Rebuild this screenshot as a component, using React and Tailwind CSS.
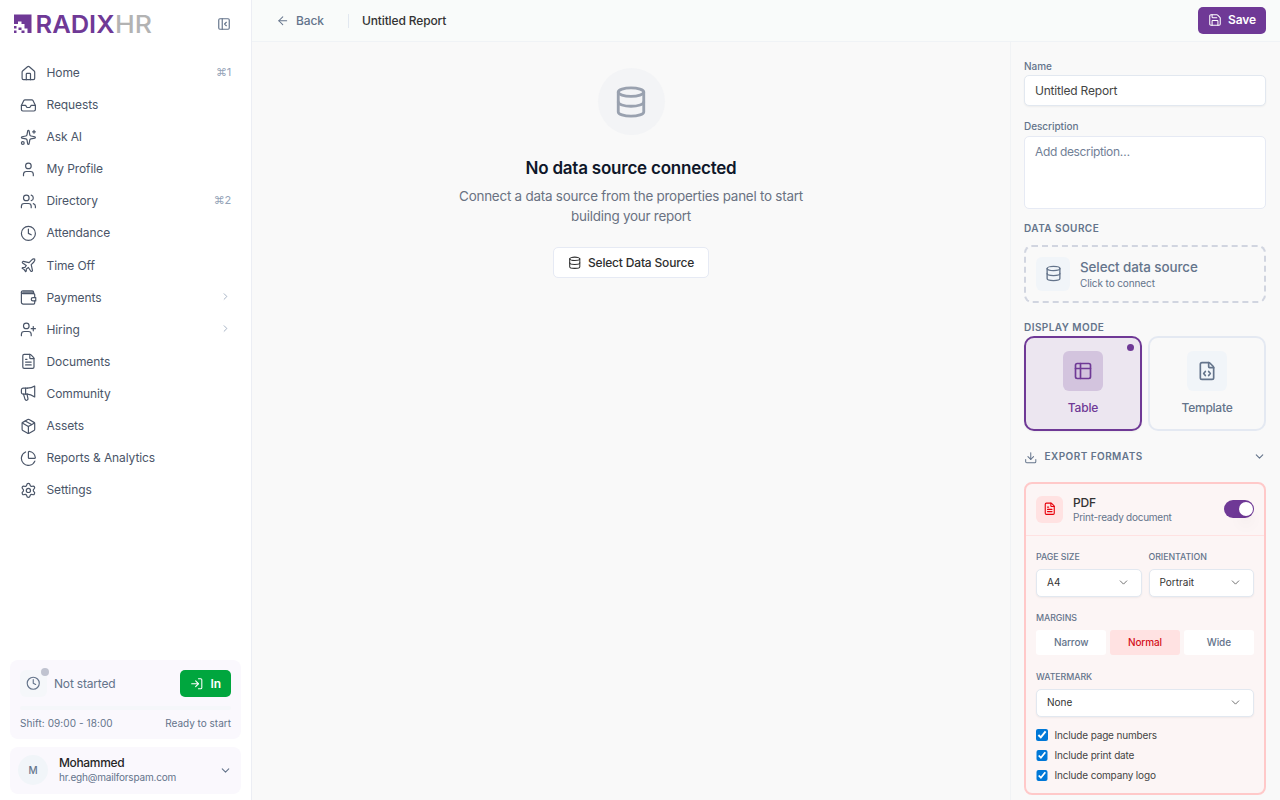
import { useState } from 'react';
import {
  ArrowLeft,
  ChartPie,
  ChevronDown,
  ChevronRight,
  Clock,
  Database,
  Download,
  FileCode,
  FileText,
  House,
  Inbox,
  LogIn,
  Package,
  PanelLeftClose,
  Plane,
  Save,
  Settings,
  Sparkles,
  User,
  UserPlus,
  Users,
} from 'lucide-react';

function WalletIcon({ size, strokeWidth, className }) {
  return (
    <svg width={size} height={size} viewBox="0 0 24 24" fill="none" stroke="currentColor" strokeWidth={strokeWidth} strokeLinecap="round" strokeLinejoin="round" className={className}>
      <path d="M21 12V8a1.500 1.500 0 0 0-1.500-1.500H4a2 2 0 0 1-2-2V19a2.500 2.500 0 0 0 2.500 2.500h15A1.500 1.500 0 0 0 21 20v-3" />
      <path d="M2 4.500A2 2 0 0 1 4 2.500h13.500a2 2 0 0 1 2 2v2M4 4.500h15" />
      <path d="M22.500 12.200h-4a2.400 2.400 0 0 0 0 4.800h4z" />
    </svg>
  );
}

function MegaphoneIcon({ size, strokeWidth, className }) {
  return (
    <svg width={size} height={size} viewBox="0 0 24 24" fill="none" stroke="currentColor" strokeWidth={strokeWidth} strokeLinecap="round" strokeLinejoin="round" className={className}>
      <path d="M10.500 4.500H4.500A2.500 2.500 0 0 0 2 7v3.500A2.500 2.500 0 0 0 4.500 13h6" />
      <path d="M10.500 4.500c4 0 7.500-1 10.500-3v15.500C18 15 14.500 13 10.500 13M8 4.500V13" />
      <path d="M5 13l2.200 7.500a2.200 2.200 0 0 0 4.200-1.200L10 13" />
    </svg>
  );
}

function TableIcon({ size, strokeWidth }) {
  return (
    <svg width={size} height={size} viewBox="0 0 24 24" fill="none" stroke="currentColor" strokeWidth={strokeWidth} strokeLinecap="round" strokeLinejoin="round">
      <rect x="3" y="3" width="18" height="18" rx="2" />
      <path d="M3 9h18M9 3v18" />
    </svg>
  );
}

function Logo() {
  return (
    <svg width="142" height="36" viewBox="0 0 142 36" aria-label="RADIXHR">
      <path
        fill="#6f3996"
        d="M1 8.500h17.500V27h-4v-4.500h-3V18H8.500v-2.500H5V18H1zM1 20h2.500v2.500H1zM5.500 21.500h3V24h-3zM1 24.500h2.500V27H1zM8.500 24.500h3V27h-3z"
      />
      <text x="22.500" y="26.500" fontSize="24.500" fontWeight="600" fill="#6f3996" textLength="79" lengthAdjust="spacingAndGlyphs">RADIX</text>
      <text x="102" y="26.500" fontSize="24.500" fontWeight="500" fill="#b3b3b3" textLength="37" lengthAdjust="spacingAndGlyphs">HR</text>
    </svg>
  );
}

const navItems = [
  { label: 'Home', icon: House, shortcut: '1' },
  { label: 'Requests', icon: Inbox },
  { label: 'Ask AI', icon: Sparkles },
  { label: 'My Profile', icon: User },
  { label: 'Directory', icon: Users, shortcut: '2' },
  { label: 'Attendance', icon: Clock },
  { label: 'Time Off', icon: Plane },
  { label: 'Payments', icon: WalletIcon, expandable: true },
  { label: 'Hiring', icon: UserPlus, expandable: true },
  { label: 'Documents', icon: FileText },
  { label: 'Community', icon: MegaphoneIcon },
  { label: 'Assets', icon: Package },
  { label: 'Reports & Analytics', icon: ChartPie },
  { label: 'Settings', icon: Settings },
];

function Sidebar() {
  return (
    <aside className="flex w-[252px] shrink-0 flex-col border-r border-[#eceef4] bg-white">
      <div className="flex h-[47px] items-center justify-between pl-[13px] pr-5">
        <Logo />
        <PanelLeftClose size={14} strokeWidth={2} className="text-[#64748b]" />
      </div>

      <nav className="mt-[10px] flex flex-col pl-5 pr-5">
        {navItems.map(({ label, icon: Icon, shortcut, expandable }) => (
          <a key={label} href="#" className="flex h-[32.080px] items-center text-[12px] text-[#4a5568]">
            <Icon size={16.800} strokeWidth={1.700} className="mr-[9.700px] shrink-0" />
            <span className="flex-1 tracking-[-0.1px]">{label}</span>
            {shortcut && (
              <span className="mb-0.5 text-[11px] tracking-[-0.3px] text-[#94a3b8]">⌘{shortcut}</span>
            )}
            {expandable && <ChevronRight size={11} strokeWidth={1.800} className="mb-0.5 text-[#94a3b8]" />}
          </a>
        ))}
      </nav>

      <div className="mt-auto flex flex-col gap-[7.500px] px-[10px] pb-[6.500px]">
        <div className="h-[79px] rounded-lg bg-[#faf8fd] px-[10px] pt-[10px]">
          <div className="flex items-center">
            <div className="relative flex size-[27px] items-center justify-center rounded-md bg-[#f5f7fa] text-[#64748b]">
              <Clock size={14.500} strokeWidth={1.900} />
              <span className="absolute -right-[2px] -top-[2px] size-2 rounded-full bg-[#c0c3d0]" />
            </div>
            <span className="ml-[7px] flex-1 text-[12px] tracking-[-0.18px] text-[#64748b]">Not started</span>
            <button className="flex h-[27px] w-[51px] items-center justify-center gap-[7px] rounded-[5px] bg-[#00a63e] text-[12px] font-semibold text-white">
              <LogIn size={13.500} strokeWidth={1.900} />
              In
            </button>
          </div>
          <div className="mt-[9px] h-1 rounded-full bg-[#f5f7fa]" />
          <div className="mt-[5.500px] flex justify-between text-[10px] leading-[15px] text-[#64748b]">
            <span className="tracking-[0.08px]">Shift: 09:00 - 18:00</span>
            <span>Ready to start</span>
          </div>
        </div>

        <div className="flex h-[47px] items-center rounded-lg bg-[#faf8fd] pl-2 pr-[10px]">
          <div className="flex size-[30px] items-center justify-center rounded-full bg-[#f1f5f9] text-[10px] font-medium text-[#64748b]">M</div>
          <div className="mb-[2px] ml-[11px] flex-1">
            <div className="text-[12px] font-medium leading-[15px] tracking-[-0.35px] text-[#262626]">Mohammed</div>
            <div className="text-[10px] leading-[14px] tracking-[-0.18px] text-[#64748b]">hr.egh@mailforspam.com</div>
          </div>
          <ChevronDown size={13} strokeWidth={2} className="-mr-[1px] text-[#64748b]" />
        </div>
      </div>
    </aside>
  );
}

function Header() {
  return (
    <header className="flex h-[42px] shrink-0 items-center border-b border-[#f0f3f6] bg-[#f9fbfa] pl-[24px] pr-[14px]">
      <button className="flex items-center gap-[6.500px] text-[12px] font-medium tracking-[-0.1px] text-[#64748b]">
        <ArrowLeft size={13.500} strokeWidth={1.800} />
        Back
      </button>
      <div className="ml-6 h-[14px] w-px bg-[#e2e8f0]" />
      <h1 className="ml-[13px] flex-1 text-[12px] font-medium tracking-[-0.13px] text-[#333]">Untitled Report</h1>
      <button className="mb-[1px] flex h-[27px] w-[68px] items-center justify-center rounded-[5px] bg-[#6f3996] text-[12px] font-semibold tracking-[-0.1px] text-white">
        <Save size={14} strokeWidth={1.800} className="mr-[6px]" />
        Save
      </button>
    </header>
  );
}

function EmptyState() {
  return (
    <main className="flex flex-1 flex-col items-center pt-[26px]">
      <div className="flex size-[67px] items-center justify-center rounded-full bg-[#f3f4f6] text-[#99a1af]">
        <Database size={34} strokeWidth={2} />
      </div>
      <h2 className="mt-[21px] text-[17px] font-semibold leading-6 tracking-[-0.22px] text-[#0f172a]">No data source connected</h2>
      <p className="mt-[6px] w-[370px] text-center text-[13.440px] leading-5 tracking-[-0.24px] text-[#6a7282]">
        Connect a data source from the properties panel to start building your report
      </p>
      <button className="mt-[21px] flex h-[31px] w-[156px] items-center justify-center gap-[6.500px] rounded-[5px] border border-[#e6eaf4] bg-white text-[12px] font-medium tracking-[-0.18px] text-[#2e2e2e]">
        <Database size={13.500} strokeWidth={1.800} />
        Select Data Source
      </button>
    </main>
  );
}

function Select({ value }) {
  return (
    <button className="flex h-7 w-full items-center justify-between rounded-[5px] border border-[#e2e8f0] bg-white pl-[10px] pr-[11px] text-[10px] text-[#333] shadow-xs">
      {value}
      <ChevronDown size={13} strokeWidth={1.700} className="text-[#666]" />
    </button>
  );
}

function FieldLabel({ children }) {
  return <div className="text-[8.800px] font-medium leading-3 tracking-[-0.05px] text-[#64748b]">{children}</div>;
}

function PdfSettings() {
  const [enabled, setEnabled] = useState(true);
  const [margin, setMargin] = useState('Normal');

  return (
    <div className="mt-[17px] h-[313px] rounded-lg border-2 border-[#ffc9c9] bg-[#fcf5f5]">
      <div className="flex h-[52px] items-center border-b border-[#ffe2e2] px-[10px]">
        <div className="flex size-[27px] items-center justify-center rounded-[6px] bg-[#ffe2e2] text-[#e7000b]">
          <FileText size={13.500} strokeWidth={2} />
        </div>
        <div className="ml-[10px] flex-1">
          <div className="text-[12px] font-medium leading-[15px] tracking-[-0.15px] text-[#333]">PDF</div>
          <div className="text-[10px] leading-[14px] tracking-[-0.25px] text-[#64748b]">Print-ready document</div>
        </div>
        <button
          onClick={() => setEnabled(!enabled)}
          className={enabled ? 'flex h-[18px] w-[30px] items-center justify-end rounded-full bg-[#6f3996] p-[1.500px]' : 'flex h-[18px] w-[30px] items-center rounded-full bg-gray-300 p-[1.500px]'}
        >
          <span className="size-[14px] rounded-full bg-white shadow-lg" />
        </button>
      </div>

      <div className="px-[10px] pt-[15px]">
        <div className="grid grid-cols-2 gap-[7px]">
          <div className="flex flex-col gap-[6px]">
            <FieldLabel>PAGE SIZE</FieldLabel>
            <Select value="A4" />
          </div>
          <div className="flex flex-col gap-[6px]">
            <FieldLabel>ORIENTATION</FieldLabel>
            <Select value="Portrait" />
          </div>
        </div>

        <div className="mt-[15px]">
          <FieldLabel>MARGINS</FieldLabel>
          <div className="mt-[6px] grid grid-cols-3 gap-[3.500px]">
            {['Narrow', 'Normal', 'Wide'].map((option) => (
              <button
                key={option}
                onClick={() => setMargin(option)}
                className={
                  margin === option
                    ? 'h-[25px] rounded-[3px] bg-[#ffe2e2] text-[10px] font-medium tracking-[-0.1px] text-[#d4101b]'
                    : 'h-[25px] rounded-[3px] bg-white text-[10px] font-medium tracking-[-0.1px] text-[#64748b]'
                }
              >
                {option}
              </button>
            ))}
          </div>
        </div>

        <div className="mt-4 flex flex-col gap-[6px]">
          <FieldLabel>WATERMARK</FieldLabel>
          <Select value="None" />
        </div>

        <div className="mt-[11px] flex flex-col gap-[5.300px]">
          {['Include page numbers', 'Include print date', 'Include company logo'].map((option) => (
            <label key={option} className="flex h-[15px] items-center gap-[7px] text-[10px] tracking-[-0.16px] text-[#444]">
              <input type="checkbox" defaultChecked className="size-[11.500px] accent-[#0078d7]" />
              {option}
            </label>
          ))}
        </div>
      </div>
    </div>
  );
}

function PropertiesPanel() {
  return (
    <aside className="flex w-[270px] shrink-0 flex-col border-l border-[#f1f3f5] pl-[13px] pr-[14px] pt-[16px]">
      <label className="text-[10px] font-medium leading-4 text-[#64748b]">Name</label>
      <input
        defaultValue="Untitled Report"
        className="mt-[1px] h-[31px] rounded-[5px] border border-[#e2e8f0] bg-white px-[10px] text-[12px] tracking-[-0.2px] text-[#444] shadow-xs outline-none"
      />

      <label className="mt-3 text-[10px] font-medium leading-4 tracking-[-0.05px] text-[#64748b]">Description</label>
      <textarea
        placeholder="Add description…"
        className="mt-[1.500px] h-[73px] resize-none rounded-[5px] border border-[#e6eaf4] bg-white px-[10px] py-[6px] text-[12px] leading-[17px] tracking-[-0.35px] outline-none placeholder:text-[#718096]"
      />

      <div className="mt-[11px] text-[10px] font-semibold leading-4 tracking-[0.45px] text-[#64748b]">DATA SOURCE</div>
      <button className="mt-[9px] flex h-[58px] items-center rounded-lg border-2 border-dashed border-[#d1d5e0] px-[10px] text-left">
        <div className="flex size-[34px] items-center justify-center rounded-[6px] bg-[#f1f5f9] text-[#64748b]">
          <Database size={17} strokeWidth={1.900} />
        </div>
        <div className="ml-[10px]">
          <div className="text-[13.400px] font-medium leading-[18px] tracking-[-0.08px] text-[#64748b]">Select data source</div>
          <div className="text-[10px] leading-[14px] tracking-[-0.1px] text-[#64748b]">Click to connect</div>
        </div>
      </button>

      <div className="mt-4 text-[10px] font-semibold leading-4 tracking-[0.45px] text-[#64748b]">DISPLAY MODE</div>
      <div className="mt-[1px] grid grid-cols-2 gap-[6px]">
        <button className="relative flex h-[95px] flex-col items-center rounded-[10px] border-2 border-[#6f3996] bg-[#ece6f0] pt-[13px] text-[#6f3996] shadow-xs">
          <span className="absolute right-[6px] top-[6px] size-[7px] rounded-full bg-[#6f3996]" />
          <span className="flex size-10 items-center justify-center rounded-[6px] bg-[#d3c4de]">
            <TableIcon size={20} strokeWidth={2} />
          </span>
          <span className="mt-[9px] text-[12px] font-medium leading-4 tracking-[-0.2px]">Table</span>
        </button>
        <button className="flex h-[95px] flex-col items-center rounded-[10px] border-2 border-[#e4e9f2] pt-[13px] text-[#64748b]">
          <span className="flex size-10 items-center justify-center rounded-[6px] bg-[#f1f5f9]">
            <FileCode size={20} strokeWidth={2} />
          </span>
          <span className="mt-[9px] text-[12px] font-medium leading-4 tracking-[-0.25px]">Template</span>
        </button>
      </div>

      <div className="mt-[18px] flex h-4 items-center text-[#64748b]">
        <Download size={13.500} strokeWidth={1.800} className="mt-[2px]" />
        <span className="ml-[7px] flex-1 text-[10px] font-semibold tracking-[0.45px]">EXPORT FORMATS</span>
        <ChevronDown size={13} strokeWidth={2} />
      </div>

      <PdfSettings />
    </aside>
  );
}

export default function App() {
  return (
    <div className="flex h-[800px] w-[1280px] overflow-hidden bg-[#f9f9f9] font-[Inter,'Noto_Sans',sans-serif]">
      <Sidebar />
      <div className="flex min-w-0 flex-1 flex-col">
        <Header />
        <div className="flex min-h-0 flex-1">
          <EmptyState />
          <PropertiesPanel />
        </div>
      </div>
    </div>
  );
}
